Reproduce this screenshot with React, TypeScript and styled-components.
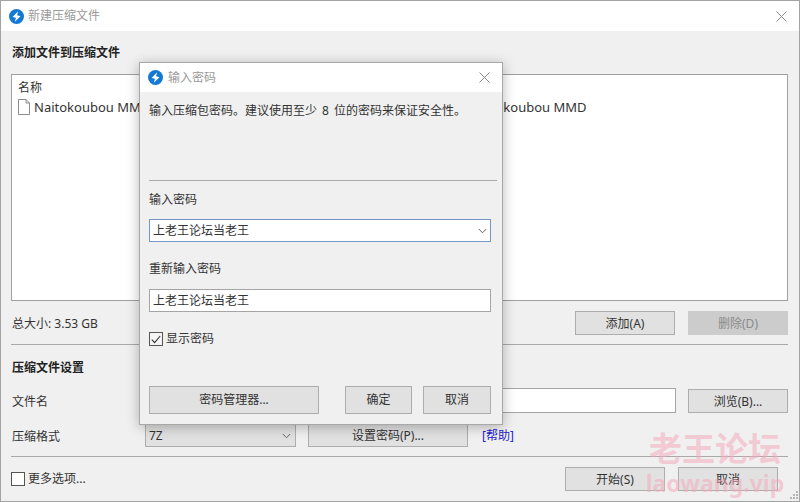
import React from 'react';
import styled, { createGlobalStyle } from 'styled-components';

const GlobalStyle = createGlobalStyle`
	html, body {
		margin: 0;
		padding: 0;
		background: #f0f0f0;
		overflow: hidden;
	}
	* {
		box-sizing: border-box;
	}
`;

const Window = styled.div`
	position: relative;
	width: 800px;
	height: 502px;
	display: flex;
	flex-direction: column;
	background: #f0f0f0;
	border: 1px solid #a3a3a3;
	color: #333;
	font-family: 'Noto Sans', 'Noto Sans CJK SC', sans-serif;
	font-size: 12px;
	line-height: 16px;
`;

const TitleBar = styled.div`
	flex: none;
	height: ${(p) => p.$height}px;
	display: flex;
	align-items: center;
	padding: 0 ${(p) => p.$right}px 0 ${(p) => p.$left}px;
	background: #fff;
`;

const TitleText = styled.div`
	flex: 1;
	margin-left: ${(p) => p.$gap}px;
	color: #9a9a9a;
`;

const Body = styled.div`
	flex: 1;
	display: flex;
	flex-direction: column;
	padding: 14px 11px 0 10px;
`;

const SectionTitle = styled.div`
	font-weight: bold;
	color: #222;
	margin-top: ${(p) => p.$top || 0}px;
	padding-left: 1px;
`;

const ListBox = styled.div`
	height: 227px;
	margin-top: 13px;
	padding: 5px 6px;
	background: #fff;
	border: 1px solid #a0a0a0;
	overflow: hidden;
`;

const ListHeader = styled.div`
	height: 16px;
`;

const FileRow = styled.div`
	display: flex;
	align-items: center;
	height: 20px;
	margin-top: 1px;
	font-size: 13px;
	white-space: nowrap;
`;

const FileName = styled.span`
	margin-left: 4px;
`;

const OtherName = styled.span`
	margin-left: 320px;
`;

const Row = styled.div`
	display: flex;
	align-items: center;
	flex: none;
	margin-top: ${(p) => p.$top}px;
	padding-right: ${(p) => p.$right || 0}px;
`;

const RowLabel = styled.div`
	flex: none;
	width: ${(p) => p.$width}px;
	padding: 2px 0 0 1px;
`;

const Spacer = styled.div`
	flex: 1;
`;

const Separator = styled.div`
	flex: none;
	height: 1px;
	background: #a9a9a9;
	margin-top: ${(p) => p.$top}px;
	margin-right: ${(p) => p.$overhang || 0}px;
`;

const Button = styled.button`
	flex: none;
	width: ${(p) => p.$width}px;
	height: ${(p) => p.$height || 24}px;
	margin-left: ${(p) => p.$left || 0}px;
	padding: ${(p) => (p.$height ? 0 : 2)}px 0 0;
	background: ${(p) => (p.disabled ? '#cccccc' : '#e1e1e1')};
	border: 1px solid ${(p) => (p.disabled ? '#cccccc' : '#adadad')};
	color: ${(p) => (p.disabled ? '#8a8a8a' : '#333')};
	font: inherit;
`;

const TextField = styled.div`
	flex: ${(p) => (p.$grow ? 1 : 'none')};
	height: ${(p) => p.$height || 23}px;
	display: flex;
	align-items: center;
	padding: 0 ${(p) => (p.$focused ? 3 : 0)}px 0 3px;
	background: #fff;
	border: 1px solid ${(p) => (p.$focused ? '#7396c4' : '#a5a5a5')};
`;

const FieldValue = styled.div`
	flex: 1;
`;

const FormatSelect = styled.div`
	flex: none;
	width: 151px;
	height: 23px;
	display: flex;
	align-items: center;
	padding: 0 4px 0 3px;
	background: #e1e1e1;
	border: 1px solid #adadad;
`;

const HelpLink = styled.span`
	margin-left: 14px;
	color: #2222cc;
`;

const CheckLabel = styled.label`
	display: flex;
	align-items: center;
	gap: 3px;
`;

const CheckBox = styled.span`
	flex: none;
	width: 14px;
	height: 14px;
	display: flex;
	align-items: center;
	justify-content: center;
	background: ${(p) => (p.$checked ? '#f4f4f4' : '#fff')};
	border: 1px solid #555;
`;

const Grip = styled.svg`
	position: absolute;
	right: 1px;
	bottom: 1px;
`;

const Dialog = styled.div`
	position: absolute;
	left: 138px;
	top: 61px;
	width: 364px;
	height: 363px;
	display: flex;
	flex-direction: column;
	background: #f0f0f0;
	border: 1px solid #a8a8a8;
	box-shadow: 0 2px 12px rgba(0, 0, 0, 0.28);
`;

const DialogBody = styled.div`
	flex: 1;
	display: flex;
	flex-direction: column;
	padding: 0 11px 0 9px;
`;

const Text = styled.div`
	flex: none;
	margin-top: ${(p) => p.$top}px;
`;

const Description = styled(Text)`
	word-spacing: 2px;
`;

const Field = styled.div`
	display: flex;
	margin-top: ${(p) => p.$top}px;
`;

const Watermark = styled.div`
	position: absolute;
	right: 9px;
	bottom: 5px;
	width: 150px;
	display: flex;
	flex-direction: column;
	align-items: center;
	color: rgba(245, 170, 188, 0.55);
	font-family: 'Noto Sans', 'Noto Sans CJK SC', sans-serif;
	font-weight: bold;
	pointer-events: none;
`;

const WatermarkTitle = styled.div`
	font-size: 33px;
	line-height: 40px;
	white-space: nowrap;
`;

const WatermarkUrl = styled.div`
	font-size: 23px;
	line-height: 26px;
	margin-top: 1px;
	white-space: nowrap;
`;

const AppIcon = () => (
	<svg width="15" height="15" viewBox="0 0 16 16">
		<circle cx="8" cy="8" r="8" fill="#1479d4" />
		<path d="M9.8 2.4 L8.6 6.6 L12.2 7.6 L6.2 13.6 L7.4 9.4 L3.8 8.4 Z" fill="#fff" />
	</svg>
);

const CloseIcon = () => (
	<svg width="11" height="11" viewBox="0 0 11 11">
		<path d="M0.5 0.5 L10.5 10.5 M10.5 0.5 L0.5 10.5" stroke="#8a8a8a" strokeWidth="1" fill="none" />
	</svg>
);

const FileIcon = () => (
	<svg width="12" height="16" viewBox="0 0 12 16">
		<path d="M0.5 0.5 H8 L11.5 4 V15.5 H0.5 Z" fill="#fff" stroke="#8c8c8c" />
		<path d="M8 0.5 V4 H11.5" fill="none" stroke="#8c8c8c" />
	</svg>
);

const Chevron = () => (
	<svg width="9" height="6" viewBox="0 0 9 6">
		<path d="M0.8 1 L4.5 4.8 L8.2 1" fill="none" stroke="#666" strokeWidth="1" />
	</svg>
);

const CheckMark = () => (
	<svg width="10" height="9" viewBox="0 0 10 9">
		<path d="M0.8 4.6 L3.6 7.6 L9.2 1" fill="none" stroke="#333" strokeWidth="1.1" />
	</svg>
);

const PasswordDialog = () => {
	const password = '上老王论坛当老王';
	return (
		<Dialog>
			<TitleBar $height={29} $left={8} $right={12}>
				<AppIcon />
				<TitleText $gap={5}>输入密码</TitleText>
				<CloseIcon />
			</TitleBar>
			<DialogBody>
				<Description $top={11}>输入压缩包密码。建议使用至少 8 位的密码来保证安全性。</Description>
				<Separator $top={61} $overhang={-6} />
				<Text $top={11}>输入密码</Text>
				<Field $top={11}>
					<TextField $grow $focused>
						<FieldValue>{password}</FieldValue>
						<Chevron />
					</TextField>
				</Field>
				<Text $top={19}>重新输入密码</Text>
				<Field $top={12}>
					<TextField $grow>{password}</TextField>
				</Field>
				<Row $top={19}>
					<CheckLabel>
						<CheckBox $checked>
							<CheckMark />
						</CheckBox>
						显示密码
					</CheckLabel>
				</Row>
				<Row $top={39}>
					<Button $width={170} $height={28}>
						密码管理器...
					</Button>
					<Spacer />
					<Button $width={67} $height={28}>
						确定
					</Button>
					<Button $width={68} $height={28} $left={11}>
						取消
					</Button>
				</Row>
			</DialogBody>
		</Dialog>
	);
};

const App = () => {
	return (
		<Window>
			<GlobalStyle />
			<TitleBar $height={30} $left={8} $right={12}>
				<AppIcon />
				<TitleText $gap={4}>新建压缩文件</TitleText>
				<CloseIcon />
			</TitleBar>
			<Body>
				<SectionTitle>添加文件到压缩文件</SectionTitle>
				<ListBox>
					<ListHeader>名称</ListHeader>
					<FileRow>
						<FileIcon />
						<FileName>Naitokoubou MMD</FileName>
						<OtherName>Naitokoubou MMD</OtherName>
					</FileRow>
				</ListBox>
				<Row $top={10}>
					<RowLabel $width={120}>总大小: 3.53 GB</RowLabel>
					<Spacer />
					<Button $width={100}>添加(A)</Button>
					<Button $width={100} $left={13} disabled>
						删除(D)
					</Button>
				</Row>
				<Separator $top={9} />
				<SectionTitle $top={15}>压缩文件设置</SectionTitle>
				<Row $top={12}>
					<RowLabel $width={134}>文件名</RowLabel>
					<TextField $grow $height={25} />
					<Button $width={100} $left={12}>
						浏览(B)...
					</Button>
				</Row>
				<Row $top={11}>
					<RowLabel $width={134}>压缩格式</RowLabel>
					<FormatSelect>
						<FieldValue>7Z</FieldValue>
						<Chevron />
					</FormatSelect>
					<Button $width={160} $height={23} $left={12}>
						设置密码(P)...
					</Button>
					<HelpLink>[帮助]</HelpLink>
				</Row>
				<Separator $top={9} />
				<Row $top={10} $right={10}>
					<CheckLabel>
						<CheckBox />
						更多选项...
					</CheckLabel>
					<Spacer />
					<Button $width={100}>开始(S)</Button>
					<Button $width={100} $left={13}>
						取消
					</Button>
				</Row>
			</Body>
			<Grip width="10" height="10" viewBox="0 0 10 10">
				<path d="M8 1h2v2H8zM5 4h2v2H5zM8 4h2v2H8zM2 7h2v2H2zM5 7h2v2H5zM8 7h2v2H8z" fill="#b5b5b5" />
			</Grip>
			<PasswordDialog />
			<Watermark>
				<WatermarkTitle>老王论坛</WatermarkTitle>
				<WatermarkUrl>laowang.vip</WatermarkUrl>
			</Watermark>
		</Window>
	);
};

export default App;
